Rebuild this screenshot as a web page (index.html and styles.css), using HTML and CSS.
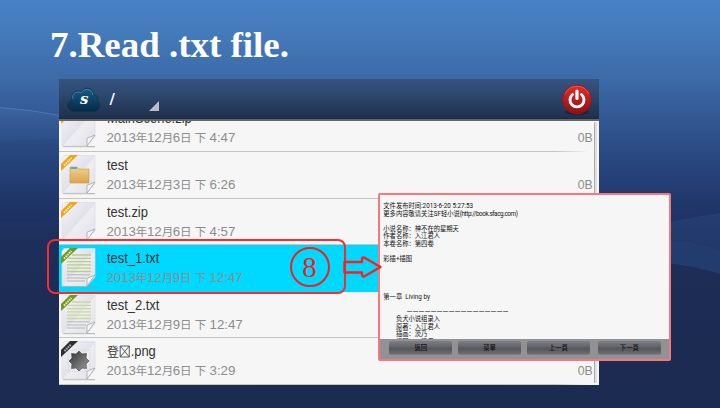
FILE: index.html
```html
<!DOCTYPE html>
<html lang="zh-Hant">
<head>
<meta charset="utf-8">
<title>Read .txt file</title>
<link rel="stylesheet" href="styles.css">
</head>
<body>
<svg class="defs" width="0" height="0" aria-hidden="true">
  <defs>
    <linearGradient id="paper" x1="0" y1="0" x2="1" y2="1"><stop offset="0" stop-color="#f4f4f6"/><stop offset=".5" stop-color="#e2e3ea"/><stop offset=".53" stop-color="#eeeef2"/><stop offset="1" stop-color="#e0e1e8"/></linearGradient>
    <linearGradient id="folder" x1="0" y1="0" x2="0" y2="1"><stop offset="0" stop-color="#f3d08c"/><stop offset="1" stop-color="#d9a550"/></linearGradient>
    <linearGradient id="star" x1="0" y1="0" x2="1" y2="1"><stop offset="0" stop-color="#303030"/><stop offset=".5" stop-color="#686868"/><stop offset="1" stop-color="#a0a0a0"/></linearGradient>
    <linearGradient id="cloud" x1="0" y1="0" x2="0" y2="1"><stop offset="0" stop-color="#175c86"/><stop offset="1" stop-color="#052a45"/></linearGradient>
    <linearGradient id="power" x1="0" y1="0" x2="0" y2="1"><stop offset="0" stop-color="#e42c26"/><stop offset="1" stop-color="#8f0f12"/></linearGradient>
    <symbol id="sheet" viewBox="0 0 36 40">
      <path d="M2 38.6H34" stroke="#999" stroke-width="1.2" opacity=".65"/>
      <path d="M3 .5H34V29L26 38H1V3Z" fill="url(#paper)" stroke="#dcdde2" stroke-width=".7"/>
      <path d="M26 38V31Q26 29.500 28 29.500L34 27Z" fill="#f6f6f8" stroke="#a4a6ad" stroke-width=".8"/>
    </symbol>
  </defs>
</svg>

<main class="slide">
  <svg class="waves" viewBox="0 0 720 408" aria-hidden="true">
    <defs>
      <linearGradient id="w1" x1="0" y1="0" x2="0" y2="1"><stop offset="0" stop-color="#5b8fd0" stop-opacity=".16"/><stop offset="1" stop-color="#3b69aa" stop-opacity="0"/></linearGradient>
    </defs>
    <path d="M0 108Q30 110 60 116V140Q30 140 0 143Z" fill="url(#w1)"/>
    <path d="M0 107.500Q30 109.500 60 115.500" fill="none" stroke="#76a8e2" stroke-opacity=".35"/>
    <path d="M0 142Q30 139 60 139V215Q30 228 0 220Z" fill="#10224c" opacity=".08"/>
    <path d="M660 224Q690 217 720 213V274Q700 267 660 262Z" fill="#3565a5" opacity=".2"/>
    <path d="M660 240Q690 240 720 250V274Q700 267 660 262Z" fill="#3565a5" opacity=".1"/>
  </svg>

  <h1 class="title">7.Read .txt file.</h1>

  <section class="window">
    <header class="bar">
      <svg class="logo" viewBox="0 0 34 26">
        <path d="M7 24.500C-1 24-1 14 5 13C3 6 10 2 14 5C17-1 26 0 27 8C32 8 31 13 30 13.500C35 17 33 24 27 24.500Z" fill="url(#cloud)" stroke="#0a3450" stroke-width=".8"/>
        <path d="M6 12C4 7 10 3 14 6C17 1 25 1 26 8" fill="none" stroke="#3c82aa" stroke-width="1"/>
        <text x="17.200" y="17" text-anchor="middle" class="logo-letter">s</text>
      </svg>
      <span class="path">/</span>
      <svg class="corner" viewBox="0 0 10 10"><path d="M10 0V10H0Z" fill="#b9bdc5"/></svg>
      <svg class="power" viewBox="0 0 32 32">
        <ellipse cx="16" cy="28" rx="12" ry="3" fill="#101d30" opacity=".6"/>
        <circle cx="16" cy="15.500" r="14.300" fill="url(#power)" stroke="#9f1217" stroke-width=".9"/>
        <path d="M4 10A13.200 13.200 0 0 1 28 10" fill="none" stroke="#f1605a" stroke-width=".8"/>
        <path d="M11.500 10.500A7 7 0 1 0 20.500 10.500" fill="none" stroke="#fff" stroke-width="2.900" stroke-linecap="round"/>
        <path d="M16 7V14.500" stroke="#fff" stroke-width="3.200" stroke-linecap="round"/>
      </svg>
    </header>

    <div class="list">
      <article class="row first">
        <svg class="icon" viewBox="0 0 36 40"><use href="#sheet"/><path d="M0 16V9L9 0H17Z" fill="#efa61d"/></svg>
        <div class="info"><div class="name">MainScene.zip</div><div class="date">2013<i>年</i>12<i>月</i>6<i>日</i> <i>下</i> 4:47</div></div>
        <span class="size">0B</span>
      </article>
      <article class="row">
        <svg class="icon" viewBox="0 0 36 40"><use href="#sheet"/>
          <path d="M9 12H16L18 14H28V28H9Z" fill="url(#folder)" stroke="#c99746" stroke-width=".6"/><path d="M9.500 12H16V14H9.500Z" fill="#4bb2cf"/>
          <path d="M0 16V9L9 0H17Z" fill="#efa61d"/><path d="M3 10.500L10.500 3" stroke="#fff0bd" stroke-width="1.800" stroke-dasharray="1.600 .8"/></svg>
        <div class="info"><div class="name">test</div><div class="date">2013<i>年</i>12<i>月</i>3<i>日</i> <i>下</i> 6:26</div></div>
        <span class="size">0B</span>
      </article>
      <article class="row">
        <svg class="icon" viewBox="0 0 36 40"><use href="#sheet"/>
          <path d="M0 16V9L9 0H17Z" fill="#efa61d"/><path d="M3 10.500L10.500 3" stroke="#fff0bd" stroke-width="1.800" stroke-dasharray="1.600 .8"/></svg>
        <div class="info"><div class="name">test.zip</div><div class="date">2013<i>年</i>12<i>月</i>6<i>日</i> <i>下</i> 4:57</div></div>
      </article>
      <article class="row selected">
        <svg class="icon" viewBox="0 0 36 40"><use href="#sheet"/>
          <path d="M11 7H30M7 10.300H30M6 13.600H30M6 16.900H30M6 20.200H30M6 23.500H30" stroke="#b9cd88" stroke-width="1.300"/><path d="M6 26.800H29M6 30H25M6 33H24" stroke="#b0b2b5" stroke-width="1"/>
          <path d="M0 16V9L9 0H17Z" fill="#71991f"/><path d="M3 10.500L10.500 3" stroke="#e0edb9" stroke-width="2" stroke-dasharray="1.600 .8"/></svg>
        <div class="info"><div class="name">test_1.txt</div><div class="date">2013<i>年</i>12<i>月</i>9<i>日</i> <i>下</i> 12:47</div></div>
      </article>
      <article class="row">
        <svg class="icon" viewBox="0 0 36 40"><use href="#sheet"/>
          <path d="M11 7H30M7 10.300H30M6 13.600H30M6 16.900H30M6 20.200H30M6 23.500H30" stroke="#c8d89f" stroke-width="1.300"/><path d="M6 26.800H29M6 30H25M6 33H24" stroke="#b5b8ba" stroke-width="1"/>
          <path d="M0 16V9L9 0H17Z" fill="#71991f"/><path d="M3 10.500L10.500 3" stroke="#e0edb9" stroke-width="2" stroke-dasharray="1.600 .8"/></svg>
        <div class="info"><div class="name">test_2.txt</div><div class="date">2013<i>年</i>12<i>月</i>9<i>日</i> <i>下</i> 12:47</div></div>
      </article>
      <article class="row">
        <svg class="icon" viewBox="0 0 36 40"><use href="#sheet"/>
          <path d="M7 9H29V30H7Z" fill="none" stroke="#cfcfd5" stroke-width=".7" stroke-dasharray="1 1"/>
          <path d="M18 10L21 13L25.500 12.500L25 17L28 20L25 23L25.500 27.500L21 27L18 30L15 27L10.500 27.500L11 23L8 20L11 17L10.500 12.500L15 13Z" fill="url(#star)" stroke="#444" stroke-width=".6"/>
          <path d="M0 16V9L9 0H17Z" fill="#2d2f35"/><path d="M3.500 10L10 3.500" stroke="#b2b4b8" stroke-width="2" stroke-dasharray="1.600 .8"/></svg>
        <div class="info"><div class="name"><i>登</i><svg class="missing" viewBox="0 0 12 13"><path d="M1 1H11V12H1ZL11 12M11 1L1 12" fill="none" stroke="#444" stroke-width=".9"/></svg>.png</div><div class="date">2013<i>年</i>12<i>月</i>6<i>日</i> <i>下</i> 3:29</div></div>
        <span class="size">0B</span>
      </article>
      <div class="scrollbar"></div>
    </div>
  </section>

  <section class="reader">
    <div class="text" lang="zh-Hans">
      <p>文件发布时间:2013-6-20 5:27:53</p>
      <p>更多内容敬请关注SF轻小说<span class="url">(http://book.sfacg.com)</span></p>
      <p></p>
      <p>小说名称：神不在的星期天</p>
      <p>作者名称：入江君人</p>
      <p>本卷名称：第四卷</p>
      <p></p>
      <p>彩插+插图</p>
      <p></p><p></p><p></p><p></p>
      <p>第一章&nbsp; Living by</p>
      <p></p>
      <p class="rule">—————————————————</p>
      <p class="indent">负犬小说组录入</p>
      <p class="indent">原著：入江君人</p>
      <p class="indent">插画：茨乃</p>
      <p class="indent">扫图：入江君</p>
    </div>
    <nav class="tools"><button>返回</button><button>菜單</button><button>上一頁</button><button class="last">下一頁</button></nav>
  </section>

  <div class="frame"></div>
  <div class="step">8</div>
  <svg class="arrow" viewBox="0 0 40 24"><path d="M1.500 7H19V4.500Q19 1.500 22 3L37.500 12L22 21Q19 22.500 19 19.500V17.500H1.500Z" fill="none" stroke="#fb1f20" stroke-width="2.400" stroke-linejoin="round"/></svg>
</main>
</body>
</html>
```
FILE: styles.css
```css
* { box-sizing: border-box; }
body { margin: 0; }
.defs { position: absolute; }
p, h1 { margin: 0; }
i { font-style: normal; }
.slide {
  position: relative;
  width: 720px;
  height: 408px;
  overflow: hidden;
  padding: 24px 0 0 59px;
  font-family: "Liberation Sans", "Noto Sans CJK TC", sans-serif;
  background:
    repeating-linear-gradient(135deg, rgba(255,255,255,.012) 0 1.414px, rgba(0,0,0,.012) 1.414px 2.828px),
    linear-gradient(#4781c6 0, #447bbc 30px, #3b69a8 80px, #315792 120px, #274680 160px, #20376b 200px, #1c2e5b 240px, #1b2b53 300px, #1a2a50 408px);
}
.waves { position: absolute; inset: 0; width: 720px; height: 408px; }
.title {
  position: relative;
  width: 260px;
  height: 55px;
  margin-left: -9px;
  font: bold 35px/43px "Liberation Serif", serif;
  color: #fff;
  white-space: nowrap;
  transform: scaleX(1.055);
  transform-origin: 0 0;
}
.window {
  position: relative;
  width: 540px;
  height: 306px;
  background: #f6f6f6;
  overflow: hidden;
  display: flex;
  flex-direction: column;
}
.bar {
  height: 42px;
  flex: none;
  display: flex;
  align-items: flex-start;
  padding: 5px 6px 0 8px;
  background: linear-gradient(#36537f, #2f4a72 13px, #1f314d 38px, #1b2a42);
  border-bottom: 2px solid #666;
}
.logo { width: 34px; height: 28px; margin-top: 2px; }
.logo-letter { font: italic bold 15px "DejaVu Serif", serif; fill: #fff; }
.path { color: #fff; font-size: 16px; line-height: 32px; margin-left: 9px; width: 6px; transform: scaleX(1.2); }
.corner { width: 10px; height: 10px; margin: 17px 0 0 33px; }
.power { width: 32px; height: 32px; margin-left: auto; }
.list { flex: 1; position: relative; overflow: hidden; }
.row {
  height: 46.6px;
  display: flex;
  align-items: flex-start;
  padding: 3px 7px 0 2px;
  background: linear-gradient(90deg, #c4c4c4 92%, #f6f6f6 98%) 0 100% / 100% 1px no-repeat;
}
.row.first { margin-top: -15.600px; }
.row.selected { background: #00d9ff; }
.icon { width: 36px; height: 40px; flex: none; }
.info { margin-left: 9.500px; white-space: nowrap; }
.name { font-size: 14.200px; line-height: 17px; height: 19px; margin-top: 2px; color: #333; transform: scaleX(.91); transform-origin: 0 50%; }
.name i { font-size: 13px; }
.missing { width: 13px; height: 13px; vertical-align: -2px; }
.date { font-size: 13.300px; line-height: 18px; color: #8d8d8d; letter-spacing: -.06px; }
.date i { font-size: 11.500px; letter-spacing: -.4px; }
.size { margin: 21px -1px 0 auto; font-size: 13.300px; line-height: 18px; color: #8d8d8d; transform: scaleX(.92); }
.scrollbar { position: absolute; right: 2px; top: 1px; bottom: 2px; width: 3px; background: #e0e0e0; border-left: 1px solid #aaa; border-radius: 2px 2px 0 0; }
.reader {
  position: absolute;
  left: 378px;
  top: 193px;
  width: 293px;
  height: 168px;
  border: 2px solid #f7787b;
  border-radius: 2px;
  background: #f6f6f6;
  display: flex;
  flex-direction: column;
}
.text { height: 144px; padding: 8.400px 0 0 3.300px; overflow: hidden; font: 6.300px/7.520px Roboto, "Noto Sans CJK SC", sans-serif; color: #111; }
.text p { height: 7.520px; white-space: nowrap; }
.text .url { letter-spacing: -.4px; }
.text .indent { padding-left: 12.600px; }
.text .rule { padding-left: 23.500px; transform: scaleX(1.22); transform-origin: 23.500px 50%; }
.tools { flex: 1; display: flex; gap: 5.500px; padding: 2px 8px 4px 9px; background: #929294; }
.tools button {
  width: 63.500px;
  height: 14.500px;
  padding: 0;
  border: 0;
  border-radius: 2px;
  background: linear-gradient(#7e7e84, #68686f 35%, #56565d 55%, #6b6b72 90%, #85858a);
  font: 500 6.300px/14px "Noto Sans CJK TC", sans-serif;
  color: #111;
}
.tools .last { margin-left: 2px; }
.frame { position: absolute; left: 47px; top: 239px; width: 299px; height: 55px; border: 2.500px solid #f52c30; border-radius: 8px; }
.step {
  position: absolute;
  left: 289.500px;
  top: 247px;
  width: 40px;
  height: 40px;
  border: 2.500px solid #ee2024;
  border-radius: 50%;
  color: #ee2024;
  font: 29px/36px "Liberation Serif", serif;
  text-align: center;
}
.arrow { position: absolute; left: 343px; top: 255px; width: 40px; height: 24px; }
```
